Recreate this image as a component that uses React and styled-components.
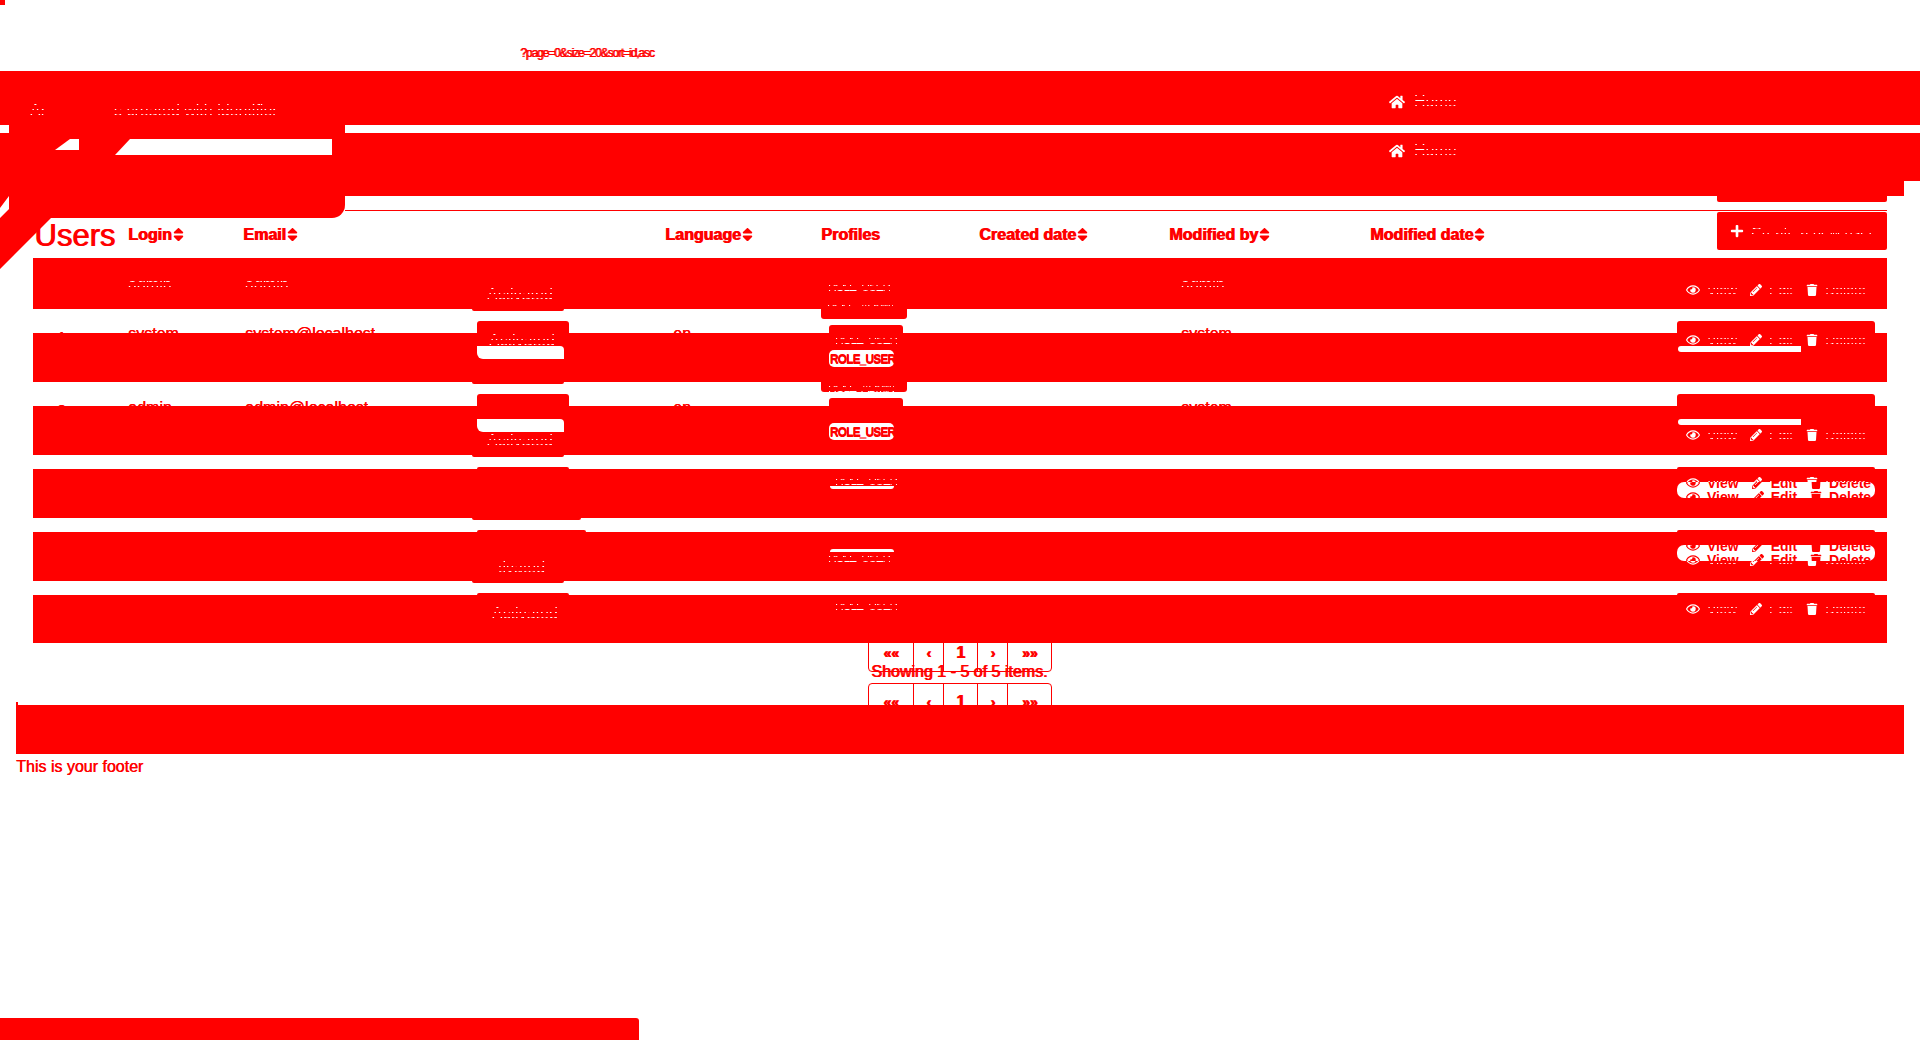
import styled, { createGlobalStyle } from "styled-components";
import { FaHome, FaRegEye, FaPencilAlt, FaTrash, FaPlus, FaSort } from "react-icons/fa";

const RED = "#ff0000";

const GlobalStyle = createGlobalStyle`
  html, body {
    margin: 0;
    background: #fff;
    font-family: "Liberation Sans", Arial, sans-serif;
  }
`;

const Page = styled.div`
  /* Layout */
  position: relative;
  display: flex;
  flex-direction: column;
  width: 1920px;
  height: 1040px;
  overflow: hidden;

  /* Style */
  background: #fff;
  color: ${RED};
`;

const CornerMark = styled.div`
  width: 5px;
  height: 5px;
  background: ${RED};
`;

const UrlRow = styled.div`
  height: 66px;
  box-sizing: border-box;
  padding: 42px 0 0 520px;
  font-size: 12px;
  line-height: 12px;
  letter-spacing: -1.1px;
  text-shadow: 1px 0 0 ${RED};
`;

/* Thin white flecks instead of solid letters */
const Speckle = styled.span`
  display: ${(props) => (props.$block ? "block" : "inline")};
  color: transparent;
  background: repeating-linear-gradient(to bottom, #fff 0 1px, transparent 1px 5px);
  -webkit-background-clip: text;
  background-clip: text;
`;

const NavBand = styled.div`
  display: grid;
  grid-template-columns: 1389px 1fr;
  height: ${(props) => props.$height}px;
  background: ${RED};
  color: #fff;
  font-size: 16px;
  line-height: 14px;
  ${(props) =>
    props.$notched &&
    `clip-path: polygon(0 0, 100% 0, 100% 48px, 1904px 48px, 1904px 100%, 0 100%);`}
`;

const Brand = styled.div`
  display: flex;
  gap: 68px;
  padding: 33px 0 0 30px;
`;

const HomeLink = styled.div`
  display: flex;
  align-items: center;
  gap: 9px;
  height: 16px;
  padding-top: ${(props) => props.$top}px;
`;

const NavGap = styled.div`
  height: 8px;
`;

/* Everything that lies over the nav bands at the top left */
const Blob = styled.div`
  position: absolute;
  top: 125px;
  left: 9px;
  width: 336px;
  height: 93px;
  background: ${RED};
  border-bottom-right-radius: 13px;
`;

const RibbonTail = styled.div`
  position: absolute;
  top: 196px;
  left: 0;
  width: 52px;
  height: 74px;
  background: ${RED};
  clip-path: polygon(0 0, 9px 0, 0 12px, 0 22px, 10px 12px, 10px 22px, 51px 22px, 0 73px);
`;

const RibbonCut = styled.div`
  position: absolute;
  top: 139px;
  left: ${(props) => props.$left}px;
  width: ${(props) => props.$width}px;
  height: ${(props) => props.$height}px;
  background: #fff;
  clip-path: polygon(${(props) => props.$slant}px 0, 100% 0, 100% 100%, 0 100%);
`;

const TableHead = styled.div`
  position: relative;
  height: 62px;
  box-sizing: border-box;
  padding: 14px 33px 0;
`;

const ButtonGhost = styled.div`
  position: absolute;
  top: 0;
  right: 33px;
  width: 170px;
  height: 6px;
  background: ${RED};
  border-radius: 0 0 2px 2px;
`;

const HeadRule = styled.div`
  height: 1px;
  margin-left: 312px;
  background: ${RED};
`;

const COLUMNS = "95px 117px 227px 193px 156px 158px 190px 201px 307px 210px";

const HeadGrid = styled.div`
  display: grid;
  grid-template-columns: ${COLUMNS};
  align-items: center;
  height: 38px;
  margin-top: 1px;
`;

const Title = styled.div`
  position: relative;
  height: 38px;
  margin-left: 1px;
  padding-top: 5px;
  box-sizing: border-box;
  font-size: 31px;
  line-height: 38px;
  text-shadow: 1px 0 0 ${RED};
`;

const HeadCell = styled.div`
  display: flex;
  align-items: center;
  margin-left: ${(props) => props.$nudge || 0}px;
  padding-top: 7px;
  font-size: 16px;
  font-weight: 700;
  text-shadow: 1px 0 0 ${RED};

  svg {
    width: 11px;
    height: 17px;
    margin-left: 1px;
  }
`;

const CreateButton = styled.div`
  display: flex;
  align-items: center;
  gap: 7px;
  justify-self: end;
  box-sizing: border-box;
  width: 170px;
  height: 38px;
  padding-left: 13px;
  background: ${RED};
  border-radius: 2px;
  color: #fff;
  font-size: 15px;
`;

const Rows = styled.div`
  display: flex;
  flex-direction: column;
  padding: 0 33px;
`;

const RowBand = styled.div`
  position: relative;
  display: grid;
  grid-template-columns: ${COLUMNS};
  height: ${(props) => props.$height}px;
  margin-top: ${(props) => props.$gap}px;
  background: ${RED};
  font-size: 16px;
  line-height: 14px;
`;

const Cell = styled.div`
  padding-top: ${(props) => props.$top || 0}px;
  padding-left: ${(props) => props.$indent || 0}px;
`;

const ProfileLine = styled.div`
  margin-bottom: 6px;
  padding-left: ${(props) => props.$indent}px;
  font-size: 12px;
  letter-spacing: -1.2px;
`;

/* Pieces of the row that stick out of, or sit on, the band */
const Tab = styled.div`
  position: absolute;
  left: ${(props) => props.$x - 33}px;
  top: ${(props) => props.$y}px;
  width: ${(props) => props.$w}px;
  height: ${(props) => props.$h}px;
  background: ${RED};
  border-radius: ${(props) => (props.$y < 0 ? "3px 3px 0 0" : "0 0 3px 3px")};
  line-height: 12px;
`;

const Strip = styled.div`
  position: absolute;
  left: ${(props) => props.$x - 33}px;
  top: ${(props) => props.$y}px;
  width: ${(props) => props.$w}px;
  height: ${(props) => props.$h}px;
  overflow: hidden;
  background: #fff;
  border-radius: ${(props) => props.$radius || "0"};
  color: ${RED};
`;

const PillText = styled.div`
  padding: 2px 0 0 1px;
  font-size: 12px;
  font-weight: 700;
  line-height: 14px;
  letter-spacing: -0.9px;
  text-shadow: 0 1px 0 ${RED};
`;

const StripLines = styled.div`
  margin-top: -6px;
`;

const Peek = styled.div`
  position: absolute;
  left: ${(props) => props.$x - 33}px;
  bottom: 100%;
  height: ${(props) => props.$h}px;
  overflow: hidden;
  color: ${RED};
  font-size: 16px;
  line-height: 16px;
  white-space: nowrap;
  text-shadow: 0.5px 0 0 ${RED};
`;

const ActionBar = styled.div`
  display: flex;
  align-items: center;
  gap: 13px;
  height: 14px;
  padding-left: 9px;
  color: ${(props) => (props.$solid ? RED : "#fff")};
  font-size: 14px;
  font-weight: ${(props) => (props.$solid ? 700 : 400)};
`;

const Action = styled.span`
  display: flex;
  align-items: center;
  gap: 7px;
`;

const PagerZone = styled.div`
  position: relative;
  display: flex;
  flex-direction: column;
  align-items: center;
  gap: 11px;
  height: 62px;
`;

const Pager = styled.div`
  display: flex;
  flex: none;
  height: 38px;
  margin-top: ${(props) => props.$shift || 0}px;
  border: 1px solid ${RED};
  border-radius: 4px;
  box-sizing: border-box;
`;

const PageItem = styled.div`
  display: flex;
  align-items: center;
  justify-content: center;
  box-sizing: border-box;
  width: ${(props) => props.$width}px;
  font-size: ${(props) => (props.$current ? 16 : 14)}px;
  font-weight: 700;
  text-shadow: 1px 0 0 ${RED};

  &:not(:last-child) {
    border-right: 1px solid ${RED};
  }
`;

const Showing = styled.div`
  position: absolute;
  top: 19px;
  left: 871px;
  font-size: 16px;
  line-height: 20px;
  white-space: nowrap;
  text-shadow: 1px 0 0 ${RED};
`;

const FooterBand = styled.div`
  position: relative;
  height: 49px;
  margin: 0 16px;
  background: ${RED};

  &::before {
    content: "";
    position: absolute;
    top: -3px;
    left: 0;
    width: 2px;
    height: 3px;
    background: ${RED};
  }
`;

const FooterText = styled.div`
  padding: 1px 0 0 16px;
  font-size: 16px;
  line-height: 24px;
  text-shadow: 0.5px 0 0 ${RED};
`;

const BottomBar = styled.div`
  width: 639px;
  height: 22px;
  margin-top: auto;
  background: ${RED};
  border-top-right-radius: 3px;
`;

function Actions({ solid }) {
  const Label = solid ? "span" : Speckle;

  return (
    <ActionBar $solid={solid}>
      <Action>
        <FaRegEye size={14} />
        <Label>View</Label>
      </Action>
      <Action>
        <FaPencilAlt size={12} />
        <Label>Edit</Label>
      </Action>
      <Action>
        <FaTrash size={12} />
        <Label>Delete</Label>
      </Action>
    </ActionBar>
  );
}

const ROWS = [
  {
    gap: 0,
    height: 51,
    login: "admin",
    email: "admin",
    modifiedBy: "admin",
    textTop: 20,
    status: { top: 30, indent: 15 },
    profiles: [
      { label: "ROLE_USER", indent: 7 },
      { label: "ROLE_ADMIN", indent: 6 },
    ],
    profileTop: 22,
    actionsTop: 25,
    tabs: [
      { x: 472, y: 51, w: 92, h: 2 },
      { x: 821, y: 51, w: 86, h: 10 },
    ],
  },
  {
    gap: 24,
    height: 49,
    status: { top: 1, indent: 17 },
    profiles: [{ label: "ROLE_USER", indent: 14 }],
    profileTop: 0,
    actionsTop: -2,
    peek: { h: 7, id: "1", login: "system", email: "system@localhost", lang: "en", by: "system" },
    tabs: [
      { x: 477, y: -12, w: 92, h: 12 },
      { x: 472, y: 49, w: 92, h: 2 },
      { x: 829, y: -8, w: 74, h: 8 },
      { x: 821, y: 49, w: 86, h: 10, text: "ROLE_ADMIN" },
      { x: 1677, y: -12, w: 198, h: 12 },
    ],
    strips: [
      { x: 477, y: 13, w: 87, h: 13, radius: "0 4px 0 6px" },
      { x: 1678, y: 13, w: 123, h: 6, radius: "3px 0 0 3px" },
      { x: 829, y: 17, w: 65, h: 17, radius: "5px", pill: true },
    ],
  },
  {
    gap: 24,
    height: 49,
    status: { top: 28, indent: 15 },
    profiles: [],
    actionsTop: 22,
    peek: { h: 6, id: "3", login: "admin", email: "admin@localhost", lang: "en", by: "system" },
    tabs: [
      { x: 477, y: -12, w: 92, h: 12 },
      { x: 472, y: 49, w: 92, h: 2 },
      { x: 829, y: -8, w: 74, h: 8 },
      { x: 1677, y: -12, w: 198, h: 12 },
    ],
    strips: [
      { x: 477, y: 13, w: 87, h: 13, radius: "0 4px 0 6px" },
      { x: 1678, y: 13, w: 123, h: 6, radius: "3px 0 0 3px" },
      { x: 829, y: 17, w: 65, h: 17, radius: "5px", pill: true },
    ],
  },
  {
    gap: 14,
    height: 49,
    profiles: [{ label: "ROLE_USER", indent: 14 }],
    profileTop: 5,
    actionsTop: 7,
    tabs: [
      { x: 477, y: -2, w: 92, h: 2 },
      { x: 472, y: 49, w: 109, h: 2 },
      { x: 1677, y: -2, w: 198, h: 2 },
    ],
    strips: [
      { x: 830, y: 17, w: 64, h: 3, radius: "0 0 3px 3px" },
      { x: 1677, y: 13, w: 198, h: 16, radius: "7px", actions: true },
    ],
  },
  {
    gap: 14,
    height: 49,
    status: { top: 29, indent: 26, label: "tivated" },
    profiles: [{ label: "ROLE_USER", indent: 7 }],
    profileTop: 19,
    actionsTop: 21,
    tabs: [
      { x: 477, y: -2, w: 109, h: 2 },
      { x: 472, y: 49, w: 92, h: 2 },
      { x: 1677, y: -2, w: 198, h: 2 },
    ],
    strips: [
      { x: 830, y: 17, w: 64, h: 3, radius: "3px 3px 0 0" },
      { x: 1677, y: 13, w: 198, h: 16, radius: "7px", actions: true },
    ],
  },
  {
    gap: 14,
    height: 48,
    status: { top: 12, indent: 20 },
    profiles: [{ label: "ROLE_USER", indent: 14 }],
    profileTop: 4,
    actionsTop: 7,
    tabs: [
      { x: 477, y: -2, w: 92, h: 2 },
      { x: 1677, y: -2, w: 198, h: 2 },
    ],
  },
];

function Row({ row }) {
  const { peek, status, profiles = [], tabs = [], strips = [] } = row;

  return (
    <RowBand $gap={row.gap} $height={row.height}>
      <Cell />
      <Cell $top={row.textTop}>{row.login && <Speckle>{row.login}</Speckle>}</Cell>
      <Cell $top={row.textTop}>{row.email && <Speckle>{row.email}</Speckle>}</Cell>
      <Cell $top={status && status.top} $indent={status && status.indent}>
        {status && <Speckle $block>{status.label || "Activated"}</Speckle>}
      </Cell>
      <Cell />
      <Cell $top={row.profileTop}>
        {profiles.map((profile) => (
          <ProfileLine key={profile.label} $indent={profile.indent}>
            <Speckle>{profile.label}</Speckle>
          </ProfileLine>
        ))}
      </Cell>
      <Cell />
      <Cell $top={row.textTop} $indent={12}>
        {row.modifiedBy && <Speckle>{row.modifiedBy}</Speckle>}
      </Cell>
      <Cell />
      <Cell $top={row.actionsTop}>
        {row.actionsTop !== undefined && <Actions />}
      </Cell>

      {tabs.map((tab) => (
        <Tab key={`${tab.x}-${tab.y}`} $x={tab.x} $y={tab.y} $w={tab.w} $h={tab.h}>
          {tab.text && (
            <ProfileLine $indent={7}>
              <Speckle>{tab.text}</Speckle>
            </ProfileLine>
          )}
        </Tab>
      ))}

      {strips.map((strip) => (
        <Strip key={strip.x} $x={strip.x} $y={strip.y} $w={strip.w} $h={strip.h} $radius={strip.radius}>
          {strip.pill && <PillText>ROLE_USER</PillText>}
          {strip.actions && (
            <StripLines>
              <Actions solid />
              <Actions solid />
            </StripLines>
          )}
        </Strip>
      ))}

      {peek && (
        <>
          <Peek $x={57} $h={2}>{peek.id}</Peek>
          <Peek $x={128} $h={peek.h}>{peek.login}</Peek>
          <Peek $x={245} $h={peek.h}>{peek.email}</Peek>
          <Peek $x={673} $h={peek.h}>{peek.lang}</Peek>
          <Peek $x={1181} $h={peek.h}>{peek.by}</Peek>
        </>
      )}
    </RowBand>
  );
}

function PagerBar({ shift }) {
  return (
    <Pager $shift={shift}>
      <PageItem $width={45}>««</PageItem>
      <PageItem $width={30}>‹</PageItem>
      <PageItem $width={34} $current>1</PageItem>
      <PageItem $width={30}>›</PageItem>
      <PageItem $width={43}>»»</PageItem>
    </Pager>
  );
}

export default function App() {
  const headers = [
    { label: "Login", sort: true },
    { label: "Email", sort: true, nudge: -2 },
    { skip: true },
    { label: "Language", sort: true },
    { label: "Profiles" },
    { label: "Created date", sort: true },
    { label: "Modified by", sort: true },
    { label: "Modified date", sort: true },
  ];

  return (
    <>
      <GlobalStyle />
      <Page>
        <CornerMark />
        <UrlRow>?page=0&amp;size=20&amp;sort=id,asc</UrlRow>

        <NavBand $height={54}>
          <Brand>
            <Speckle>Ar</Speckle>
            <Speckle>s created with identifier</Speckle>
          </Brand>
          <HomeLink $top={23}>
            <FaHome size={16} />
            <Speckle>Home</Speckle>
          </HomeLink>
        </NavBand>
        <NavGap />
        <NavBand $height={63} $notched>
          <div />
          <HomeLink $top={10}>
            <FaHome size={16} />
            <Speckle>Home</Speckle>
          </HomeLink>
        </NavBand>

        <TableHead>
          <ButtonGhost />
          <HeadRule />
          <HeadGrid>
            <Title>Users</Title>
            {headers.map((header, index) =>
              header.skip ? (
                <div key={index} />
              ) : (
                <HeadCell key={header.label} $nudge={header.nudge}>
                  {header.label}
                  {header.sort && <FaSort />}
                </HeadCell>
              )
            )}
            <CreateButton>
              <FaPlus size={14} />
              <Speckle>Create a new user</Speckle>
            </CreateButton>
          </HeadGrid>
        </TableHead>

        <Rows>
          {ROWS.map((row, index) => (
            <Row key={index} row={row} />
          ))}
        </Rows>

        <PagerZone>
          <PagerBar shift={-9} />
          <Showing>Showing 1 - 5 of 5 items.</Showing>
          <PagerBar />
        </PagerZone>

        <FooterBand />
        <FooterText>This is your footer</FooterText>
        <BottomBar />

        <Blob />
        <RibbonTail />
        <RibbonCut $left={55} $width={24} $height={11} $slant={15} />
        <RibbonCut $left={115} $width={217} $height={16} $slant={15} />
      </Page>
    </>
  );
}
